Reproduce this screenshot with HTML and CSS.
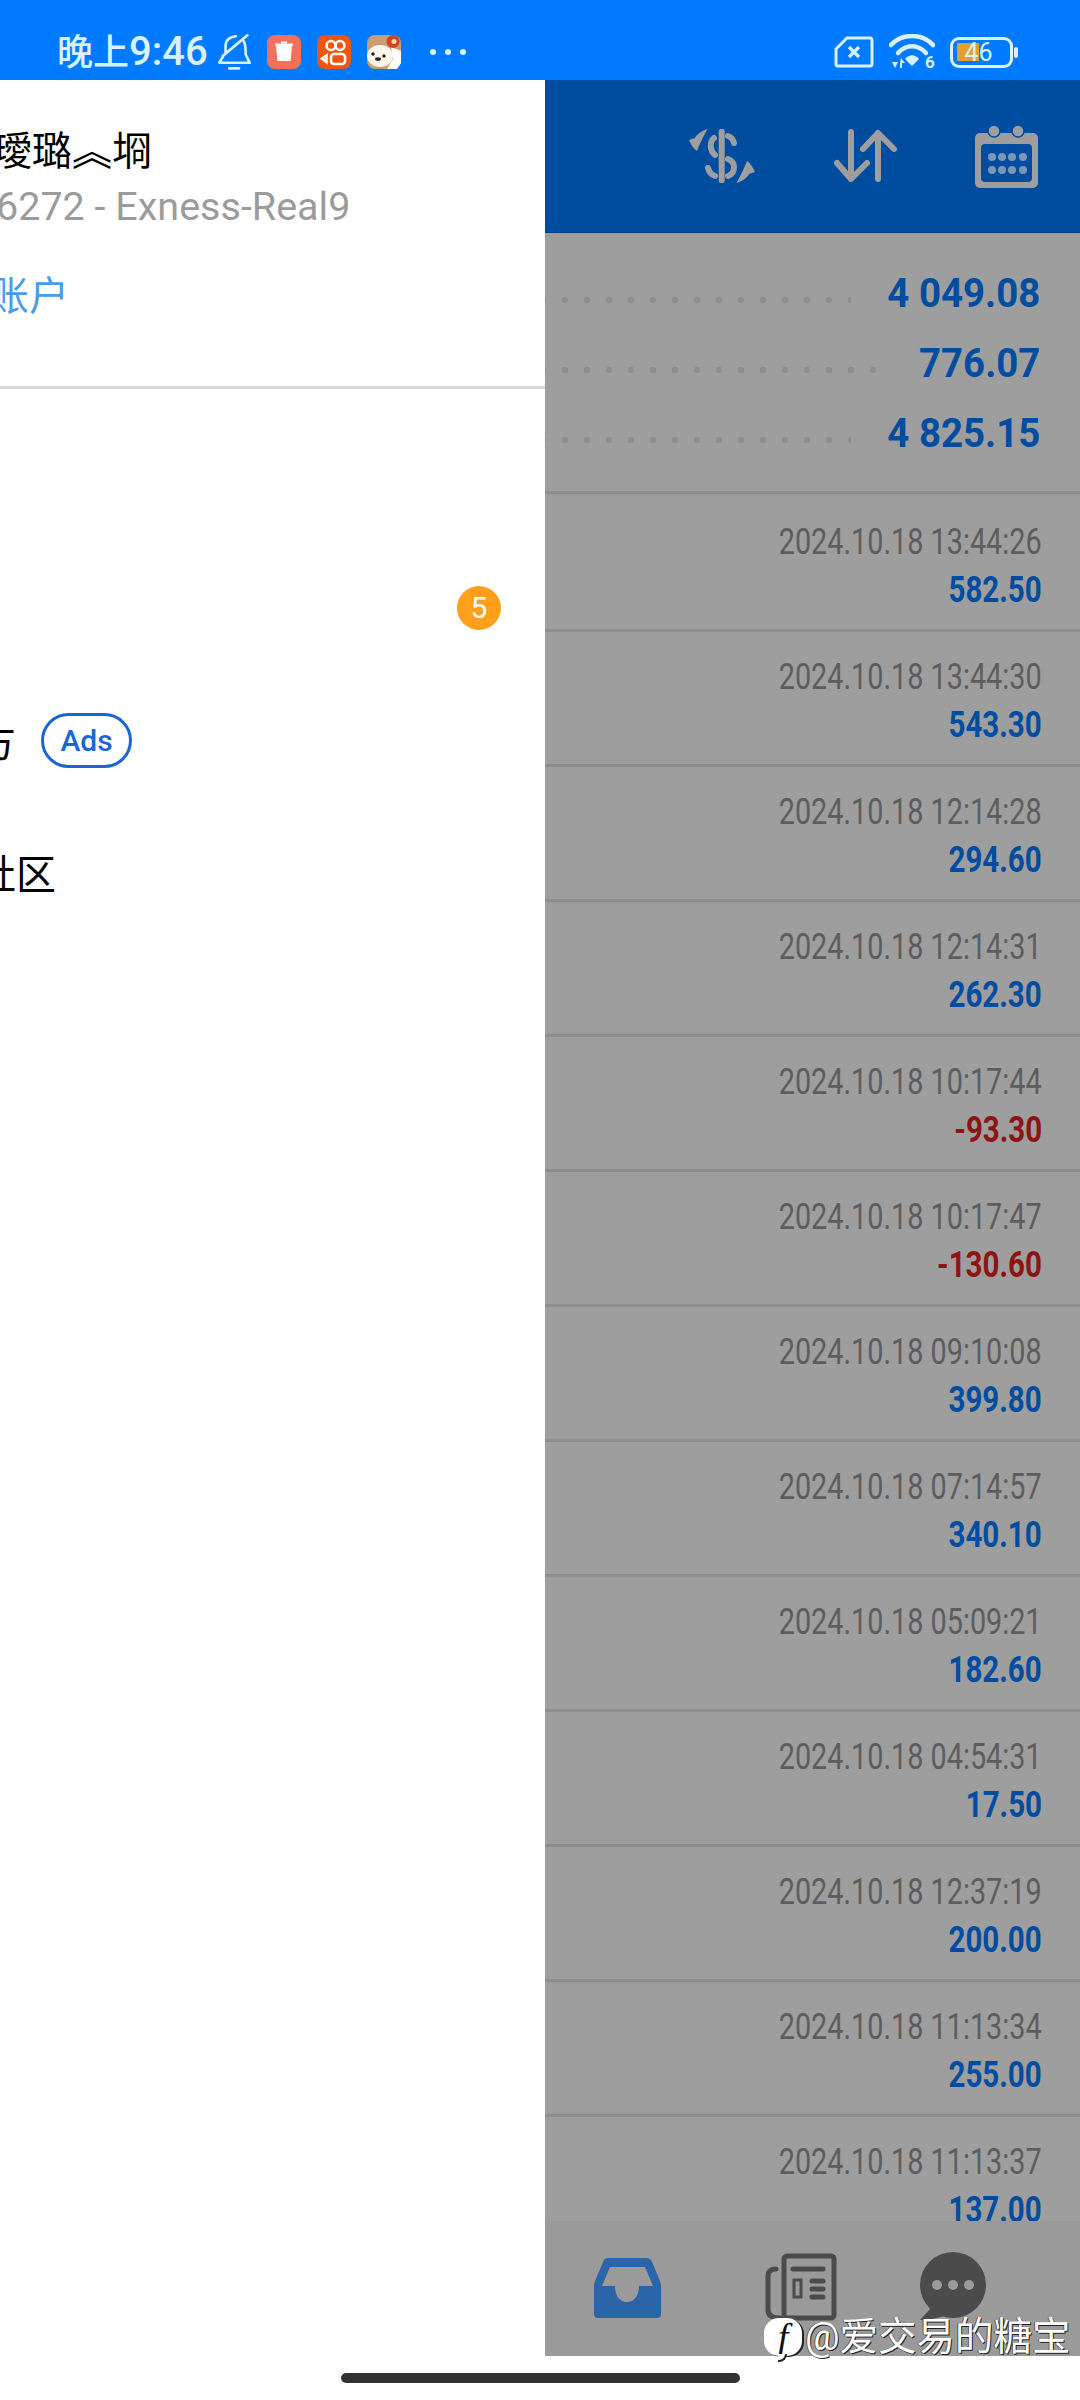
FILE: index.html
```html
<!DOCTYPE html>
<html lang="zh-CN">
<head>
    <meta charset="UTF-8">
    <meta name="viewport" content="width=device-width, initial-scale=1.0">
    <title>History</title>
    <link rel="stylesheet" href="styles.css">
</head>
<body>
    <!-- Android status bar -->
    <header class="status">
        <span class="time"><span class="time-cjk">晚上</span>9:46</span>
        <svg class="bell" viewBox="15 100 115 115">
            <path d="M47 160V140C47 122 60 112 78 110M102 125C108 135 108 145 108 165L120 190H28L40 170M38 170L113 107M58 207H88"/>
        </svg>
        <svg class="tile tile-first" viewBox="0 0 34 34">
            <rect width="34" height="34" rx="8" fill="#f4705a"/>
            <path d="M9 11H25L23.5 26H10.500Z" fill="#fff"/>
            <rect x="8" y="8.500" width="18" height="2.500" rx="1" fill="#fff"/>
            <rect x="14" y="6.500" width="6" height="2" fill="#fff"/>
        </svg>
        <svg class="tile" viewBox="0 0 34 34">
            <rect width="34" height="34" rx="8" fill="#f0560f"/>
            <g fill="none" stroke="#fff" stroke-width="2.600">
                <circle cx="14" cy="10.500" r="4.500"/>
                <circle cx="23" cy="10.500" r="4.500"/>
                <rect x="14" y="19" width="14" height="10" rx="3"/>
                <path d="M9.500 20.500L5 23.500L9.500 27Z"/>
            </g>
        </svg>
        <svg class="tile" viewBox="0 0 34 34">
            <rect width="34" height="34" rx="8" fill="#c89f72"/>
            <ellipse cx="13" cy="21" rx="13" ry="11" fill="#fbf6ea"/>
            <path d="M24 12L34 16V28L30 34H20L26 24Z" fill="#fff"/>
            <circle cx="26" cy="6.500" r="6.500" fill="#d6402a"/>
            <circle cx="27" cy="6.500" r="2.500" fill="#f2d9a6"/>
            <circle cx="6" cy="19" r="1.700" fill="#222"/>
            <circle cx="17" cy="21" r="1.700" fill="#222"/>
            <ellipse cx="11" cy="24" rx="3" ry="1.800" fill="#222"/>
        </svg>
        <span class="more">
            <i></i><i></i><i></i>
        </span>
        <svg class="sim" viewBox="0 0 40 32">
            <path d="M13 2H36C37.500 2 38 2.500 38 4V28C38 29.500 37.500 30 36 30H4C2.500 30 2 29.500 2 28V13Z" fill="none" stroke="#d9f1ff" stroke-width="3"/>
            <path d="M15 11L25 21M25 11L15 21" stroke="#d9f1ff" stroke-width="3.200" fill="none"/>
        </svg>
        <span class="wifi">
            <svg viewBox="0 0 46 36">
                <g fill="none" stroke="#d9f1ff" stroke-width="4.500" stroke-linecap="round">
                    <path d="M2 11C13 -1 33 -1 44 11"/>
                    <path d="M9 19C17 10 29 10 37 19"/>
                </g>
                <path d="M16 25C20 20 26 20 30 25L23 32Z" fill="#d9f1ff"/>
                <path d="M3 28H9L6 34ZM12 24L16 29H13V34H11V29Z" fill="#d9f1ff"/>
            </svg>
            <b class="wifi-six">6</b>
        </span>
        <span class="battery">46</span>
        <span class="battery-tip"></span>
    </header>

    <div class="screen">
        <!-- Drawer, caught half way through its slide -->
        <aside class="drawer">
            <div class="account">
                <div class="account-name">璦璐︽埛</div>
                <div class="account-server">6272 - Exness-Real9</div>
                <div class="account-link">账户</div>
            </div>
            <div class="menu">
                <div class="menu-item menu-item-badge"><span class="badge">5</span></div>
                <div class="menu-item">
                    <span class="menu-label menu-label-long">官方</span>
                    <span class="ads">Ads</span>
                </div>
                <div class="menu-item">
                    <span class="menu-label">社区</span>
                </div>
            </div>
        </aside>

        <main class="content">
            <div class="toolbar">
                <svg class="tool tool-dollar" viewBox="15 15 75 65">
                    <rect x="48.700" y="20" width="6" height="54" rx="2" fill="#9e9e9e"/>
                    <g fill="none" stroke="#9e9e9e" stroke-width="6" stroke-linecap="round">
                        <path d="M58 27C61 28 63 30 64 34"/>
                        <path d="M44 29C39 33 40 42 45 46"/>
                        <path d="M58 50C66 53 66 64 58 67"/>
                        <path d="M38 59C39 63 42 66 45 67"/>
                    </g>
                    <path d="M37.500 20C31 22 27 25 25 29L19 31C21 36 24 40 27 42C29 37 31 32 37.500 20Z" fill="#9e9e9e"/>
                    <path d="M37.500 20C31 22 27 25 25 29L19 31C21 36 24 40 27 42C29 37 31 32 37.500 20Z" fill="#9e9e9e" transform="rotate(180 52 47)"/>
                </svg>
                <svg class="tool tool-arrows" viewBox="160 15 70 65">
                    <path d="M181 23V70M167 54L181 70L197 54M208 70V24M193 40L208 24L224 40" fill="none" stroke="#9e9e9e" stroke-width="6" stroke-linecap="round" stroke-linejoin="round"/>
                </svg>
                <svg class="tool tool-calendar" viewBox="0 0 63 63">
                    <rect y="8" width="63" height="55" rx="5" fill="#9e9e9e"/>
                    <rect x="6" y="19" width="51" height="38" rx="4" fill="#004c9e"/>
                    <circle cx="19" cy="6" r="6" fill="#9e9e9e" stroke="#004c9e" stroke-width="1.500"/>
                    <circle cx="43" cy="6" r="6" fill="#9e9e9e" stroke="#004c9e" stroke-width="1.500"/>
                    <g fill="#7f95b5">
                        <circle cx="17" cy="32" r="4"/><circle cx="27" cy="32" r="4"/><circle cx="37" cy="32" r="4"/><circle cx="48" cy="32" r="4"/>
                        <circle cx="17" cy="45" r="4"/><circle cx="27" cy="45" r="4"/><circle cx="37" cy="45" r="4"/><circle cx="48" cy="45" r="4"/>
                    </g>
                </svg>
            </div>

            <section class="summary">
                <div class="summary-row"><span class="leader"></span><span class="summary-value">4 049.08</span></div>
                <div class="summary-row"><span class="leader"></span><span class="summary-value">776.07</span></div>
                <div class="summary-row"><span class="leader"></span><span class="summary-value">4 825.15</span></div>
            </section>

            <section class="deals">
                <div class="deal"><span class="deal-date">2024.10.18 13:44:26</span><span class="deal-amount">582.50</span></div>
                <div class="deal"><span class="deal-date">2024.10.18 13:44:30</span><span class="deal-amount">543.30</span></div>
                <div class="deal"><span class="deal-date">2024.10.18 12:14:28</span><span class="deal-amount">294.60</span></div>
                <div class="deal"><span class="deal-date">2024.10.18 12:14:31</span><span class="deal-amount">262.30</span></div>
                <div class="deal"><span class="deal-date">2024.10.18 10:17:44</span><span class="deal-amount loss">-93.30</span></div>
                <div class="deal"><span class="deal-date">2024.10.18 10:17:47</span><span class="deal-amount loss">-130.60</span></div>
                <div class="deal"><span class="deal-date">2024.10.18 09:10:08</span><span class="deal-amount">399.80</span></div>
                <div class="deal"><span class="deal-date">2024.10.18 07:14:57</span><span class="deal-amount">340.10</span></div>
                <div class="deal"><span class="deal-date">2024.10.18 05:09:21</span><span class="deal-amount">182.60</span></div>
                <div class="deal"><span class="deal-date">2024.10.18 04:54:31</span><span class="deal-amount">17.50</span></div>
                <div class="deal"><span class="deal-date">2024.10.18 12:37:19</span><span class="deal-amount">200.00</span></div>
                <div class="deal"><span class="deal-date">2024.10.18 11:13:34</span><span class="deal-amount">255.00</span></div>
                <div class="deal"><span class="deal-date">2024.10.18 11:13:37</span><span class="deal-amount">137.00</span></div>
            </section>

            <nav class="tabs">
                <svg class="tab-inbox" viewBox="0 0 67 64">
                    <path fill="#2a65a8" fill-rule="evenodd" d="M14 1H52C55 1 57 2 58 5L66 24C66.500 26 67 27 67 29V57C67 60 65 61 63 61H4C2 61 0 60 0 57V29C0 27 .5 26 1 24L9 5C10 2 12 1 14 1ZM8 29L16 10H51L59 29H45C45 39 40 45 33 45C26 45 21 39 21 29Z"/>
                </svg>
                <svg class="tab-news" viewBox="5 10 72 72">
                    <g fill="none" stroke="#4b4b4b" stroke-width="5" stroke-linecap="round">
                        <rect x="24" y="16" width="50" height="62" rx="3"/>
                        <path d="M16 29C10 29 8 32 8 36V70C8 75 12 78 20 78"/>
                        <path d="M33 29H63M52 41H63M52 49H63M52 57H63"/>
                    </g>
                    <rect x="34" y="40" width="7" height="17" fill="none" stroke="#4b4b4b" stroke-width="3"/>
                </svg>
                <svg class="tab-chat" viewBox="158 10 72 72">
                    <circle cx="193" cy="45" r="33" fill="#4b4b4b"/>
                    <path d="M171 68L160 80C170 80 180 78 188 74Z" fill="#4b4b4b"/>
                    <circle cx="177" cy="45" r="5" fill="#9a9a9a"/>
                    <circle cx="193" cy="45" r="5" fill="#9a9a9a"/>
                    <circle cx="209" cy="45" r="5" fill="#9a9a9a"/>
                </svg>
            </nav>
        </main>
    </div>

    <footer class="gesture">
        <div class="gesture-bar"></div>
    </footer>

    <!-- Watermark stamped over the screenshot -->
    <div class="watermark">
        <span class="watermark-logo">f</span>
        <span class="watermark-text">@爱交易的糖宝</span>
    </div>
</body>
</html>
```

FILE: styles.css
```css
/* General Styling */
body {
    font-family: Roboto, "Noto Sans CJK SC", sans-serif;
    background-color: #fff;
    margin: 0;
    padding: 0;
    width: 1080px;
    height: 2400px;
    overflow: hidden;
    position: relative;
}

/* Status bar */
.status {
    display: flex;
    align-items: center;
    box-sizing: border-box;
    height: 80px;
    padding: 24px 0 0 57px;
    background-color: #007bff;
    color: #d9f1ff;
}

.time {
    font-size: 40px;
    font-weight: 500;
    line-height: 56px;
    white-space: nowrap;
}

.time-cjk {
    font-size: 36px;
    font-weight: 500;
}

.bell {
    width: 38px;
    height: 38px;
    margin-left: 7px;
    fill: none;
    stroke: #d9f1ff;
    stroke-width: 8;
    stroke-linecap: round;
    stroke-linejoin: round;
}

.tile {
    width: 34px;
    height: 34px;
    margin-left: 16px;
}

.tile-first {
    margin-left: 14px;
}

.more {
    display: flex;
    gap: 9px;
    margin-left: 29px;
}

.more i {
    width: 6px;
    height: 6px;
    border-radius: 50%;
    background-color: #d9f1ff;
}

.sim {
    width: 40px;
    height: 32px;
    margin-left: auto;
}

.wifi {
    display: flex;
    align-items: flex-end;
    margin-left: 15px;
    width: 46px;
    height: 36px;
}

.wifi svg {
    width: 46px;
    height: 36px;
    flex: none;
}

.wifi-six {
    font-size: 17px;
    line-height: 15px;
    margin-left: -10px;
}

.battery {
    box-sizing: border-box;
    width: 63px;
    height: 31px;
    margin-left: 15px;
    border: 3px solid #d9f1ff;
    border-radius: 9px;
    font-size: 25px;
    line-height: 25px;
    text-align: center;
    padding-right: 6px;
    background: linear-gradient(#e3a030, #e3a030) 4px 3px / 22px 18px no-repeat;
}

.battery-tip {
    width: 4px;
    height: 11px;
    margin: 0 62px 0 1px;
    border-radius: 2px;
    background-color: #d9f1ff;
}

/* Main split: drawer on the left, dimmed app on the right */
.screen {
    display: flex;
    height: 2276px;
}

.drawer {
    flex: none;
    width: 545px;
    background-color: #fff;
    overflow: hidden;
}

.account {
    box-sizing: border-box;
    height: 309px;
    padding-top: 44px;
    border-bottom: 3px solid #d8d8d8;
}

.account-name {
    margin-left: -8px;
    font-size: 40px;
    line-height: 56px;
    color: #000;
    white-space: nowrap;
}

.account-server {
    margin: 5px 0 0 -4px;
    font-size: 39.500px;
    line-height: 44px;
    color: #9b9b9b;
    white-space: nowrap;
}

.account-link {
    margin: 48px 0 0 -11px;
    font-size: 40px;
    line-height: 40px;
    color: #4a9bea;
}

.menu {
    margin-top: 153px;
}

.menu-item {
    display: flex;
    align-items: center;
    height: 132px;
}

.menu-item-badge {
    justify-content: flex-end;
    padding-right: 44px;
}

.menu-label {
    margin-left: -24px;
    font-size: 40px;
    color: #000;
    white-space: nowrap;
}

.menu-label-long {
    margin-left: -64px;
}

.badge {
    width: 44px;
    height: 44px;
    border-radius: 50%;
    background-color: #ff9f1c;
    color: #fff;
    font-size: 30px;
    line-height: 44px;
    text-align: center;
}

.ads {
    box-sizing: border-box;
    width: 91px;
    height: 55px;
    margin-left: 25px;
    border: 3px solid #1a66d6;
    border-radius: 28px;
    color: #1a66d6;
    font-size: 30px;
    font-weight: 500;
    line-height: 49px;
    text-align: center;
}

.content {
    flex: 1;
    display: flex;
    flex-direction: column;
    min-width: 0;
    background-color: #9e9e9e;
}

.toolbar {
    flex: none;
    display: flex;
    align-items: center;
    box-sizing: border-box;
    height: 153px;
    padding-right: 42px;
    justify-content: flex-end;
    background-color: #004c9e;
    border-bottom: 1px solid #003f80;
}

.tool-dollar {
    width: 75px;
    height: 65px;
}

.tool-arrows {
    width: 70px;
    height: 65px;
    margin-left: 70px;
}

.tool-calendar {
    width: 63px;
    height: 63px;
    margin-left: 75px;
}

/* Balance totals */
.summary {
    flex: none;
    box-sizing: border-box;
    height: 261px;
    padding: 25px 40px 0 0;
    border-bottom: 3px solid #8e8e8e;
}

.summary-row {
    display: flex;
    align-items: center;
    height: 70px;
}

.leader {
    flex: 1;
    height: 8px;
    margin: 14px 30px 0 0;
    background: radial-gradient(circle at center, #8f8f8f 3px, transparent 3.600px) -13px 0 / 22px 8px repeat-x;
}

.summary-value {
    font-size: 40px;
    font-weight: 700;
    color: #004c9e;
    white-space: pre;
    transform: scaleX(.96);
    transform-origin: right center;
}

/* Deal list */
.deals {
    flex: 1;
    min-height: 0;
    overflow: hidden;
}

.deal {
    display: flex;
    flex-direction: column;
    align-items: flex-end;
    box-sizing: border-box;
    height: 135px;
    padding: 21px 38px 0 0;
    border-bottom: 3px solid #8e8e8e;
}

.deal:first-child {
    height: 138px;
    padding-top: 24px;
}

.deal-date, .deal-amount {
    font-size: 36px;
    line-height: 48px;
    white-space: nowrap;
    transform: scaleX(.8);
    transform-origin: right center;
}

.deal-date {
    color: #5d5d5f;
}

.deal-amount {
    font-weight: 700;
    color: #004c9e;
    transform: scaleX(.82);
}

.deal-amount.loss {
    color: #8e1414;
}

/* Bottom tabs */
.tabs {
    flex: none;
    display: flex;
    align-items: flex-start;
    box-sizing: border-box;
    height: 135px;
    padding: 29px 0 0 49px;
    background-color: #9a9a9a;
}

.tab-inbox {
    width: 67px;
    height: 64px;
    margin-top: 7px;
}

.tab-news {
    width: 72px;
    height: 72px;
    margin-left: 104px;
}

.tab-chat {
    width: 72px;
    height: 72px;
    margin-left: 81px;
}

.gesture {
    display: flex;
    justify-content: center;
    padding-top: 17px;
}

.gesture-bar {
    width: 399px;
    height: 10px;
    border-radius: 5px;
    background-color: #333;
}

.watermark {
    position: absolute;
    left: 764px;
    top: 2317px;
    display: flex;
    align-items: center;
    gap: 3px;
}

.watermark-logo {
    position: relative;
    width: 38px;
    height: 38px;
    border-radius: 15px;
    background-color: #fff;
    box-shadow: 2px 1px 0 #222;
    color: #111;
    font-family: "Liberation Serif", serif;
    font-size: 38px;
    font-style: italic;
    line-height: 38px;
    text-align: center;
}

.watermark-logo::after {
    content: "";
    position: absolute;
    left: 14px;
    bottom: -6px;
    width: 9px;
    height: 8px;
    background-color: #fff;
    border-bottom: 2px solid #222;
    border-right: 2px solid #222;
    border-bottom-right-radius: 8px;
    box-sizing: border-box;
}

.watermark-text {
    color: #fff;
    font-size: 38.500px;
    line-height: 40px;
    white-space: nowrap;
    text-shadow: 1px 1px 0 #222, -1px 0 0 #555;
}
```
